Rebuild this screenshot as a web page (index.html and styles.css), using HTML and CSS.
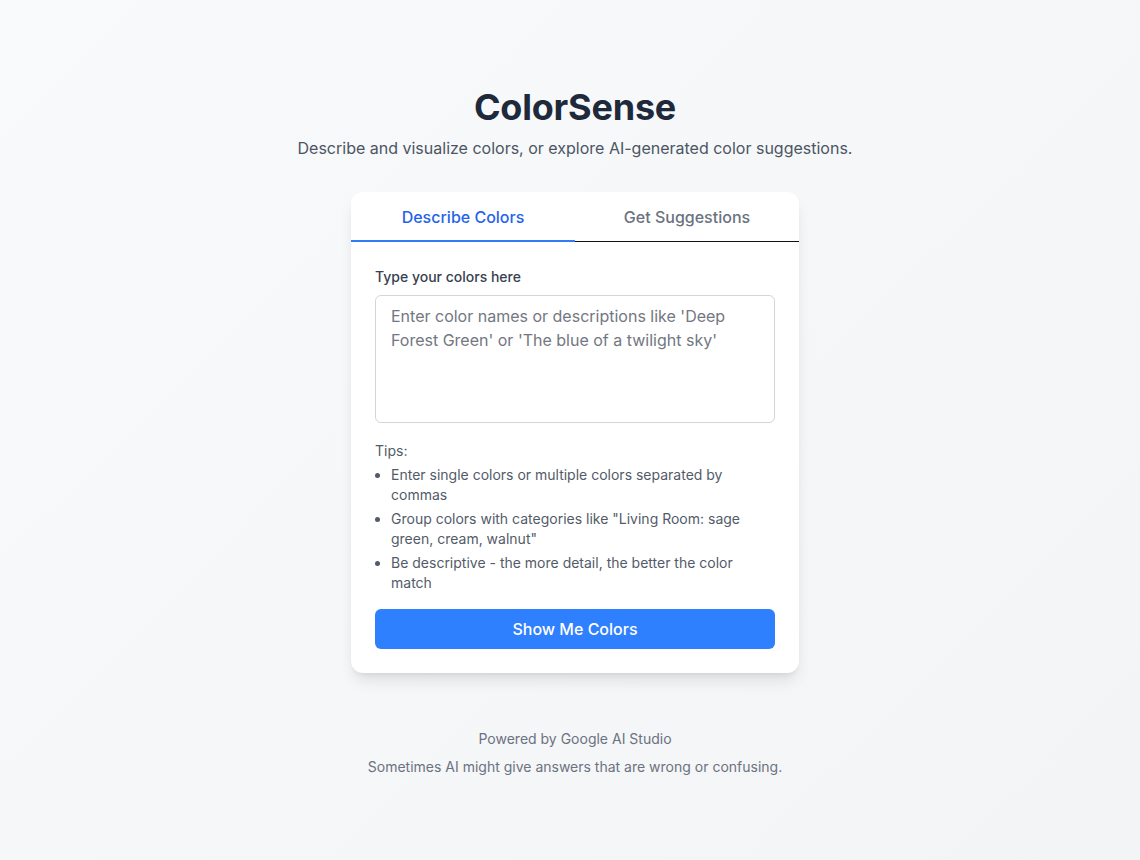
FILE: index.html
```html
<!DOCTYPE html>
<html lang="en">
<head>
<meta charset="utf-8">
<title>ColorSense</title>
<link rel="stylesheet" href="styles.css">
</head>
<body>
<div class="page">
  <header class="header">
    <h1 class="title">ColorSense</h1>
    <p class="subtitle">Describe and visualize colors, or explore AI-generated color suggestions.</p>
  </header>
  <main class="card">
    <div class="tabs">
      <button class="tab active">Describe Colors</button>
      <button class="tab">Get Suggestions</button>
    </div>
    <div class="card-body">
      <label class="label" for="colors">Type your colors here</label>
      <textarea id="colors" class="input" placeholder="Enter color names or descriptions like 'Deep Forest Green' or 'The blue of a twilight sky'"></textarea>
      <div class="tips">
        <p class="tips-title">Tips:</p>
        <ul class="tips-list">
          <li>Enter single colors or multiple colors separated by commas</li>
          <li>Group colors with categories like "Living Room: sage green, cream, walnut"</li>
          <li>Be descriptive - the more detail, the better the color match</li>
        </ul>
      </div>
      <button class="primary">Show Me Colors</button>
    </div>
  </main>
  <footer class="footer">
    <p>Powered by Google AI Studio</p>
    <p>Sometimes AI might give answers that are wrong or confusing.</p>
  </footer>
</div>
</body>
</html>
```
FILE: styles.css
```css
* { box-sizing: border-box; }
html, body { margin: 0; padding: 0; }
body {
  font-family: Inter, "Noto Sans", "Liberation Sans", sans-serif;
  background: linear-gradient(135deg, #f9fafb 0%, #f3f4f6 100%);
  min-height: 860px;
  color: #1f2937;
}
.page {
  display: flex;
  flex-direction: column;
  align-items: center;
  padding-top: 87px;
  padding-left: 10px;
}
.header { text-align: center; }
.title {
  margin: 0;
  font-size: 36px;
  line-height: 40px;
  font-weight: 700;
  color: #1e293b;
  letter-spacing: -0.2px;
}
.subtitle {
  margin: 9px 0 0;
  font-size: 16px;
  line-height: 24px;
  color: #4b5563;
}
.card {
  margin-top: 32px;
  width: 448px;
  background: #fff;
  border-radius: 12px;
  box-shadow: 0 10px 15px -3px rgba(0,0,0,0.1), 0 4px 6px -4px rgba(0,0,0,0.1);
  overflow: hidden;
}
.tabs {
  display: flex;
  border-bottom: 1px solid #111;
}
.tab {
  flex: 1;
  height: 50px;
  margin-bottom: -1px;
  background: none;
  border: none;
  border-bottom: 2px solid transparent;
  font-family: inherit;
  font-size: 16px;
  font-weight: 500;
  color: #6b7280;
  padding: 2px 0 0;
}
.tab.active {
  color: #2563eb;
  border-bottom-color: #2f7cf6;
  padding: 1px 0 0;
}
.card-body {
  padding: 25px 24px 24px;
  display: flex;
  flex-direction: column;
}
.label {
  font-size: 14px;
  line-height: 20px;
  font-weight: 500;
  color: #374151;
}
.input {
  margin-top: 8px;
  height: 128px;
  border: 1px solid #d1d5db;
  border-radius: 6px;
  padding: 8px 15px;
  font-family: inherit;
  font-size: 16px;
  line-height: 24px;
  color: #111827;
  resize: none;
  outline: none;
}
.input::placeholder { color: #737781; }
.tips {
  margin-top: 18px;
  font-size: 14px;
  line-height: 20px;
  color: #535b69;
}
.tips-title { margin: 0; }
.tips-list {
  margin: 4px 0 0;
  padding-left: 16px;
  display: flex;
  flex-direction: column;
  gap: 4px;
}
.tips-list li { padding-left: 0; }
.primary {
  margin-top: 16px;
  height: 40px;
  border: none;
  border-radius: 6px;
  background: #2f80ff;
  color: #fff;
  font-family: inherit;
  font-size: 16px;
  font-weight: 500;
}
.footer {
  margin-top: 56px;
  text-align: center;
  font-size: 14px;
  line-height: 20px;
  color: #6b7280;
}
.footer p { margin: 0 0 8px; }
```
